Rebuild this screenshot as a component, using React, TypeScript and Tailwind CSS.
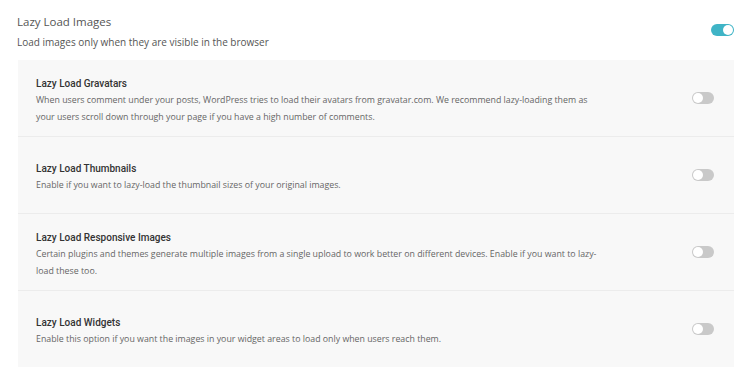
import React from 'react'

type Item = {
  title: string
  desc: string
}

const items: Item[] = [
  {
    title: 'Lazy Load Gravatars',
    desc: 'When users comment under your posts, WordPress tries to load their avatars from gravatar.com. We recommend lazy-loading them as your users scroll down through your page if you have a high number of comments.',
  },
  {
    title: 'Lazy Load Thumbnails',
    desc: 'Enable if you want to lazy-load the thumbnail sizes of your original images.',
  },
  {
    title: 'Lazy Load Responsive Images',
    desc: 'Certain plugins and themes generate multiple images from a single upload to work better on different devices. Enable if you want to lazy-load these too.',
  },
  {
    title: 'Lazy Load Widgets',
    desc: 'Enable this option if you want the images in your widget areas to load only when users reach them.',
  },
]

function Toggle({ on }: { on?: boolean }) {
  return (
    <div
      className={
        on
          ? 'flex h-[12px] w-[23px] items-center justify-end rounded-full bg-[#3fb4c6] px-[1px]'
          : 'flex h-[12px] w-[22px] items-center justify-start rounded-full bg-[#c9c9c9] px-[1px]'
      }
    >
      <div className="h-[10px] w-[10px] rounded-full bg-white" />
    </div>
  )
}

export default function App() {
  return (
    <div className="min-h-[375px] w-[750px] bg-white font-['Open_Sans',sans-serif]">
      {/* header */}
      <div className="flex items-start justify-between pl-[17px] pr-[16px] pt-[14px]">
        <div>
          <h1 className="text-[11.5px] leading-[16px] text-[#555]">Lazy Load Images</h1>
          <p className="mt-[5px] text-[10px] leading-[14px] text-[#555]">
            Load images only when they are visible in the browser
          </p>
        </div>
        <div className="pt-[10px]">
          <Toggle on />
        </div>
      </div>

      {/* options panel */}
      <div className="ml-[18px] mr-[16px] mt-[11px] bg-[#f8f8f8]">
        {items.map((item, i) => (
          <div
            key={item.title}
            className={
              i < items.length - 1
                ? 'flex h-[77px] items-center justify-between border-b border-[#ececec] pl-[18px] pr-[20px]'
                : 'flex h-[76px] items-center justify-between pl-[18px] pr-[20px]'
            }
          >
            <div className="max-w-[566px] pt-[6px]">
              <h3 className="font-['Roboto',sans-serif] text-[10px] font-medium leading-[14px] text-[#333]">
                {item.title}
              </h3>
              <p className="mt-[1px] text-[8.8px] leading-[17px] text-[#666]">{item.desc}</p>
            </div>
            <Toggle />
          </div>
        ))}
      </div>
    </div>
  )
}
